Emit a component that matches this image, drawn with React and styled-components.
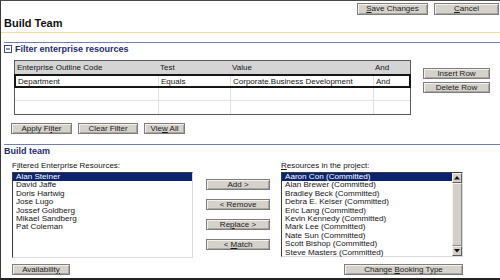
import React from 'react'
import styled, { createGlobalStyle } from 'styled-components'

const GlobalStyle = createGlobalStyle`
  body {
    margin: 0;
    background: #fff;
    font-family: "Liberation Sans", Arial, sans-serif;
  }
  * { box-sizing: border-box; }
`

const filtered = ['Alan Steiner', 'David Jaffe', 'Doris Hartwig', 'Jose Lugo', 'Jossef Goldberg', 'Mikael Sandberg', 'Pat Coleman']

const project = ['Aaron Con', 'Alan Brewer', 'Bradley Beck', 'Debra E. Keiser', 'Eric Lang', 'Kevin Kennedy', 'Mark Lee', 'Nate Sun', 'Scott Bishop', 'Steve Masters']

function MinusBox() {
  return (
    <svg width="8" height="8" viewBox="0 0 8 8">
      <rect x="0.5" y="0.5" width="7" height="7" fill="#fff" stroke="#3d4d8a" />
      <line x1="2" y1="4" x2="6" y2="4" stroke="#1e2b70" />
    </svg>
  )
}

function Arrow({ down }) {
  return (
    <svg width="6" height="4" viewBox="0 0 6 4">
      <polygon points={down ? '0,0 6,0 3,3.5' : '0,3.5 6,3.5 3,0'} fill="#111" />
    </svg>
  )
}

function App() {
  return (
    <Page>
      <GlobalStyle />
      <TopBar>
        <Button $w={71} $h={12}><u>S</u>ave Changes</Button>
        <Button $w={65} $h={12}><u>C</u>ancel</Button>
      </TopBar>
      <Title>Build Team</Title>
      <OrangeRule />

      <BlueRule $top={9} />
      <SectionHead>
        <MinusBox />
        Filter enterprise resources
      </SectionHead>

      <FilterArea>
        <Table>
          <HeadRow>
            <Cell>Enterprise Outline Code</Cell>
            <Cell>Test</Cell>
            <Cell>Value</Cell>
            <Cell>And</Cell>
          </HeadRow>
          <SelectedRow>
            <Cell>Department</Cell>
            <Cell $sep>Equals</Cell>
            <Cell $sep>Corporate.Business Development</Cell>
            <Cell $sep>And</Cell>
          </SelectedRow>
          <EmptyRow $line>
            <Cell /><Cell $sep /><Cell $sep /><Cell $sep />
          </EmptyRow>
          <EmptyRow>
            <Cell /><Cell $sep /><Cell $sep /><Cell $sep />
          </EmptyRow>
        </Table>
        <RowButtons>
          <Button $w={67}>Insert Row</Button>
          <Button $w={67}>Delete Row</Button>
        </RowButtons>
      </FilterArea>

      <FilterButtons>
        <Button $w={61}>Apply Fi<u>l</u>ter</Button>
        <Button $w={60}>Clear Filter</Button>
        <Button $w={41}>Vie<u>w</u> All</Button>
      </FilterButtons>

      <BlueRule $top={10} />
      <SectionHead>Build team</SectionHead>

      <BuildArea>
        <Column $w={181}>
          <Label>F<u>i</u>ltered Enterprise Resources:</Label>
          <List $h={86}>
            <Items>
              {filtered.map((name, i) => (
                <Item key={name} $sel={i === 0}>{name}</Item>
              ))}
            </Items>
          </List>
          <BottomRow>
            <Button $w={58}>Availabilit<u>y</u></Button>
          </BottomRow>
        </Column>

        <MoveButtons>
          <Button $w={64}>Add &gt;</Button>
          <Button $w={64}>&lt; Remove</Button>
          <Button $w={64}>Re<u>p</u>lace &gt;</Button>
          <Button $w={64}>&lt; <u>M</u>atch</Button>
        </MoveButtons>

        <Column $w={182}>
          <Label><u>R</u>esources in the project:</Label>
          <List $h={85}>
            <Items>
              {project.map((name, i) => (
                <Item key={name} $sel={i === 0}>{name} (Committed)</Item>
              ))}
            </Items>
            <Scrollbar>
              <ScrollBtn><Arrow /></ScrollBtn>
              <Thumb />
              <ScrollBtn><Arrow down /></ScrollBtn>
            </Scrollbar>
          </List>
          <BottomRow $right>
            <Button $w={119}>Change <u>B</u>ooking Type</Button>
          </BottomRow>
        </Column>
      </BuildArea>
    </Page>
  )
}

export default App

const Page = styled.div`
  width: 500px;
  height: 280px;
  border-top: 1px solid #4a4a4a;
  border-left: 1px solid #3a3a3a;
  border-bottom: 2px solid #222;
  overflow: hidden;
  display: flex;
  flex-direction: column;
  background: #fff;
`

const TopBar = styled.div`
  display: flex;
  justify-content: flex-end;
  gap: 6px;
  padding: 2px 1px 0 0;
`

const Button = styled.button`
  width: ${p => p.$w}px;
  height: ${p => p.$h || 11}px;
  flex: none;
  padding: 0;
  font: 8px/1 "Liberation Sans", Arial, sans-serif;
  color: #1a1a1a;
  text-align: center;
  background: #d5d2cb;
  border: 1px solid #7d7d7d;
  box-shadow: inset 1px 1px 0 #f3f2ef, inset -1px -1px 0 #aaa7a1;
  white-space: nowrap;
  cursor: pointer;
`

const Title = styled.h1`
  margin: 2px 0 0 3px;
  font: bold 11px/13px "Liberation Sans", Arial, sans-serif;
  color: #111;
`

const OrangeRule = styled.div`
  height: 1px;
  margin-top: 2px;
  background: #f1dca6;
`

const BlueRule = styled.div`
  height: 1px;
  margin: ${p => p.$top}px 0 0 3px;
  background: #6f7fb2;
`

const SectionHead = styled.div`
  display: flex;
  align-items: center;
  gap: 3px;
  height: 10px;
  margin: 1px 0 0 3px;
  font: bold 9px/10px "Liberation Sans", Arial, sans-serif;
  color: #1e2b70;
`

const FilterArea = styled.div`
  display: flex;
  align-items: flex-start;
  gap: 12px;
  margin: 6px 0 0 13px;
`

const Table = styled.div`
  width: 397px;
  border: 1px solid #5a5a5a;
  font-size: 8px;
  color: #141414;
`

const HeadRow = styled.div`
  display: grid;
  grid-template-columns: 143px 72px 143px 1fr;
  height: 13px;
  background: #d4d4d4;
`

const SelectedRow = styled.div`
  display: grid;
  grid-template-columns: 142px 72px 143px 1fr;
  height: 14px;
  border: 2px solid #161616;
  margin: 0 -1px;
`

const EmptyRow = styled.div`
  display: grid;
  grid-template-columns: 143px 72px 143px 1fr;
  height: 13px;
  border-bottom: ${p => (p.$line ? '1px solid #e3e3e3' : 'none')};
`

const Cell = styled.div`
  display: flex;
  align-items: center;
  padding-left: 2px;
  white-space: nowrap;
  border-left: ${p => (p.$sep ? '1px solid #e0e0e0' : 'none')};
`

const RowButtons = styled.div`
  display: flex;
  flex-direction: column;
  gap: 3px;
  margin-top: 8px;
`

const FilterButtons = styled.div`
  display: flex;
  gap: 6px;
  margin: 8px 0 0 10px;
`

const BuildArea = styled.div`
  display: flex;
  align-items: flex-start;
  margin: 5px 0 0 11px;
`

const Column = styled.div`
  display: flex;
  flex-direction: column;
  width: ${p => p.$w}px;
`

const Label = styled.div`
  height: 10px;
  font: 8px/10px "Liberation Sans", Arial, sans-serif;
  color: #141414;
  white-space: nowrap;
`

const List = styled.div`
  display: flex;
  height: ${p => p.$h}px;
  margin-top: 1px;
  border: 1px solid;
  border-color: #3c3c3c #dadada #dadada #3c3c3c;
  background: #fff;
`

const Items = styled.div`
  flex: 1;
  min-width: 0;
`

const Item = styled.div`
  height: 8.4px;
  line-height: 8.4px;
  padding-left: 3px;
  font-size: 8.1px;
  white-space: nowrap;
  background: ${p => (p.$sel ? '#0c2470' : 'transparent')};
  color: ${p => (p.$sel ? '#fff' : '#141414')};
`

const Scrollbar = styled.div`
  width: 10px;
  display: flex;
  flex-direction: column;
  background: #e6e3dd;
`

const ScrollBtn = styled.div`
  height: 10px;
  display: flex;
  align-items: center;
  justify-content: center;
  background: #d4d0c8;
  border: 1px solid;
  border-color: #f4f3f0 #5e5e5e #5e5e5e #f4f3f0;
`

const Thumb = styled.div`
  flex: 1;
  background: #d4d0c8;
  border: 1px solid;
  border-color: #f4f3f0 #8a8a8a #8a8a8a #f4f3f0;
`

const MoveButtons = styled.div`
  display: flex;
  flex-direction: column;
  gap: 9px;
  padding-top: 18px;
  margin: 0 11px 0 13px;
`

const BottomRow = styled.div`
  display: flex;
  justify-content: ${p => (p.$right ? 'flex-end' : 'flex-start')};
  margin-top: ${p => (p.$right ? 7 : 6)}px;
`
